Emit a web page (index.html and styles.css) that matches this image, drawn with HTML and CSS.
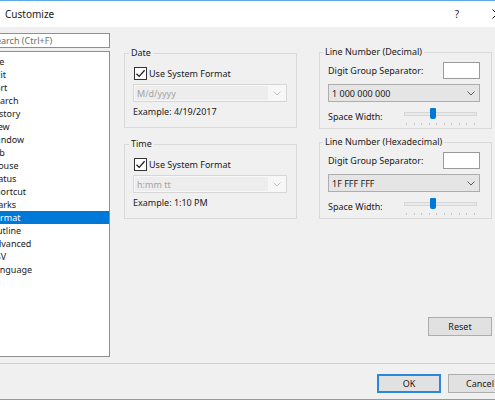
FILE: index.html
```html
<!DOCTYPE html>
<html>
<head>
<meta charset="utf-8">
<link rel="stylesheet" href="styles.css">
</head>
<body>
<div class="dialog">
  <div class="titlebar">
    <span class="title">Customize</span>
    <span class="tb-btn help">?</span>
    <span class="tb-btn close"><svg width="10" height="10" viewBox="0 0 10 10"><path d="M0.5 0.5 L9.5 9.5 M9.5 0.5 L0.5 9.5" stroke="#000" stroke-width="1" fill="none"/></svg></span>
  </div>
  <div class="content">
    <div class="sidebar">
      <div class="search">Search (Ctrl+F)</div>
      <ul class="list">
        <li>File</li>
        <li>Edit</li>
        <li>Sort</li>
        <li>Search</li>
        <li>History</li>
        <li>View</li>
        <li>Window</li>
        <li>Tab</li>
        <li>Mouse</li>
        <li>Status</li>
        <li>Shortcut</li>
        <li>Marks</li>
        <li class="selected">Format</li>
        <li>Outline</li>
        <li>Advanced</li>
        <li>CSV</li>
        <li>Language</li>
      </ul>
    </div>
    <div class="main">
      <div class="cols">
        <div class="col col-left">
          <fieldset class="group">
            <legend>Date</legend>
            <div class="check-row">
              <span class="checkbox"><svg width="13" height="13" viewBox="0 0 13 13"><path d="M2.5 6.8 L5.2 9.4 L10.6 3.2" stroke="#1e1e1e" stroke-width="1.3" fill="none"/></svg></span>
              <span>Use System Format</span>
            </div>
            <div class="combo disabled">
              <span class="field">M/d/yyyy</span>
              <span class="chev"><svg width="8" height="5" viewBox="0 0 8 5"><path d="M0.5 0.5 L4 4 L7.5 0.5" stroke="#c4c4c4" stroke-width="1" fill="none"/></svg></span>
            </div>
            <div class="example">Example: 4/19/2017</div>
          </fieldset>
          <fieldset class="group second-left">
            <legend>Time</legend>
            <div class="check-row">
              <span class="checkbox"><svg width="13" height="13" viewBox="0 0 13 13"><path d="M2.5 6.8 L5.2 9.4 L10.6 3.2" stroke="#1e1e1e" stroke-width="1.3" fill="none"/></svg></span>
              <span>Use System Format</span>
            </div>
            <div class="combo disabled">
              <span class="field">h:mm tt</span>
              <span class="chev"><svg width="8" height="5" viewBox="0 0 8 5"><path d="M0.5 0.5 L4 4 L7.5 0.5" stroke="#c4c4c4" stroke-width="1" fill="none"/></svg></span>
            </div>
            <div class="example">Example: 1:10 PM</div>
          </fieldset>
        </div>
        <div class="col col-right">
          <fieldset class="group rgroup">
            <legend>Line Number (Decimal)</legend>
            <div class="sep-row">
              <span>Digit Group Separator:</span>
              <span class="textbox"></span>
            </div>
            <div class="combo enabled">
              <span class="field">1 000 000 000</span>
              <span class="chev"><svg width="8" height="5" viewBox="0 0 8 5"><path d="M0.5 0.5 L4 4 L7.5 0.5" stroke="#5a5a5a" stroke-width="1" fill="none"/></svg></span>
            </div>
            <div class="slider-row">
              <span>Space Width:</span>
              <div class="slider">
                <div class="track"></div>
                <div class="thumb"></div>
                <div class="ticks"><i></i><i></i><i></i><i></i><i></i><i></i><i></i><i></i><i></i><i></i></div>
              </div>
            </div>
          </fieldset>
          <fieldset class="group rgroup second-right">
            <legend>Line Number (Hexadecimal)</legend>
            <div class="sep-row">
              <span>Digit Group Separator:</span>
              <span class="textbox"></span>
            </div>
            <div class="combo enabled">
              <span class="field">1F FFF FFF</span>
              <span class="chev"><svg width="8" height="5" viewBox="0 0 8 5"><path d="M0.5 0.5 L4 4 L7.5 0.5" stroke="#5a5a5a" stroke-width="1" fill="none"/></svg></span>
            </div>
            <div class="slider-row">
              <span>Space Width:</span>
              <div class="slider">
                <div class="track"></div>
                <div class="thumb"></div>
                <div class="ticks"><i></i><i></i><i></i><i></i><i></i><i></i><i></i><i></i><i></i><i></i></div>
              </div>
            </div>
          </fieldset>
        </div>
      </div>
      <div class="reset-row"><button class="btn">Reset</button></div>
    </div>
  </div>
  <div class="footer">
    <button class="btn default">OK</button>
    <button class="btn">Cancel</button>
  </div>
</div>
</body>
</html>
```

FILE: styles.css
```css
html, body {
  margin: 0;
  padding: 0;
  width: 495px;
  height: 400px;
  overflow: hidden;
  background: #f0f0f0;
}

.dialog {
  margin-left: -20px;
  width: 537px;
  font-family: "Noto Sans", "Open Sans", sans-serif;
  font-size: 9px;
  color: #1a1a1a;
  background: #f0f0f0;
}

.titlebar {
  height: 26px;
  border-top: 1px solid #5aaae6;
  background: #fff;
  display: flex;
  align-items: center;
  padding-left: 25px;
  box-sizing: content-box;
}

.title {
  flex: 1;
  font-size: 10px;
}

.tb-btn {
  width: 40px;
  display: flex;
  justify-content: center;
  align-items: center;
  font-size: 10px;
}

.content {
  display: flex;
  height: 336px;
  padding-left: 8px;
}

.sidebar {
  width: 122px;
  margin-top: 6px;
  display: flex;
  flex-direction: column;
  gap: 3px;
}

.search {
  height: 15px;
  box-sizing: border-box;
  border: 1px solid #8f8f8f;
  background: #fff;
  color: #6d6d6d;
  padding-left: 2px;
  line-height: 13px;
  white-space: nowrap;
  overflow: hidden;
}

.list {
  list-style: none;
  margin: 0;
  height: 306px;
  box-sizing: border-box;
  border: 1px solid #8f8f8f;
  background: #fff;
  padding: 3px 0 0 0;
}

.list li {
  height: 13px;
  line-height: 13px;
  padding-left: 1px;
  white-space: nowrap;
}

.list li.selected {
  background: #0078d7;
  color: #fff;
}

.main {
  margin-left: 14px;
  width: 368px;
  display: flex;
  flex-direction: column;
}

.cols {
  display: flex;
  gap: 22px;
  margin-top: 19px;
}

.col {
  width: 173px;
  display: flex;
  flex-direction: column;
}

.col-left {
  margin-top: 1px;
}

.group {
  margin: 0;
  min-width: 0;
  border: 1px solid #d9d9d9;
  padding: 0 9px 9px 8px;
  display: flex;
  flex-direction: column;
}

.group legend {
  padding: 0 2px;
  margin-left: -4px;
  line-height: 12px;
  font-size: 9px;
}

.second-left {
  margin-top: 10px;
}

.check-row {
  margin-top: 7px;
  height: 14px;
  display: flex;
  align-items: center;
  gap: 2px;
}

.checkbox {
  width: 13px;
  height: 13px;
  box-sizing: border-box;
  border: 1px solid #333;
  background: #fff;
  margin-left: 1px;
  display: flex;
  align-items: center;
  justify-content: center;
}

.checkbox svg {
  margin: -1px;
}

.combo {
  height: 18px;
  box-sizing: border-box;
  margin-top: 4px;
  display: flex;
  align-items: stretch;
}

.combo .field {
  flex: 1;
  display: flex;
  align-items: center;
  padding-left: 3px;
}

.combo .chev {
  width: 17px;
  display: flex;
  align-items: center;
  justify-content: center;
}

.combo.disabled {
  border: 1px solid #d6d6d6;
  background: #f7f7f7;
  color: #a3a3a3;
  padding: 1px;
}

.combo.disabled .field {
  background: #ededed;
  padding-left: 2px;
}

.combo.enabled {
  border: 1px solid #adadad;
  background: #e5e5e5;
  margin-top: 5px;
}

.example {
  margin-top: 4px;
  line-height: 12px;
}

.rgroup {
  padding: 0 11px 2px 8px;
}

.rgroup legend {
  margin-left: -5px;
}

.second-right {
  margin-top: 7px;
}

.sep-row {
  margin-top: 4px;
  display: flex;
  align-items: center;
  justify-content: space-between;
}

.textbox {
  width: 37px;
  height: 17px;
  box-sizing: border-box;
  border: 1px solid #9a9a9a;
  background: #fff;
}

.slider-row {
  margin-top: 4px;
  height: 20px;
  display: flex;
  justify-content: space-between;
}

.slider-row > span {
  line-height: 12px;
  margin-top: 5px;
}

.slider {
  width: 79px;
  height: 20px;
  position: relative;
}

.track {
  margin: 6px 3px 0 3px;
  height: 2px;
  background: #e7eaea;
  border: 1px solid #d6d6d6;
}

.thumb {
  position: absolute;
  left: 29px;
  top: 2px;
  width: 6px;
  height: 11px;
  background: #0078d7;
  border-radius: 1px 1px 2px 2px;
}

.ticks {
  margin: 7px 5px 0 5px;
  display: flex;
  justify-content: space-between;
}

.ticks i {
  display: block;
  width: 1px;
  height: 2px;
  background: #c4c4c4;
}

.reset-row {
  margin-top: auto;
  margin-bottom: 27px;
  display: flex;
  justify-content: flex-end;
}

.btn {
  width: 64px;
  height: 19px;
  box-sizing: border-box;
  border: 1px solid #adadad;
  background: #e1e1e1;
  font-family: "Noto Sans", "Open Sans", sans-serif;
  font-size: 9px;
  color: #1a1a1a;
  padding: 0;
  line-height: 16px;
}

.footer {
  border-top: 1px solid #d0d0d0;
  border-bottom: 1px solid #5aaae6;
  box-sizing: content-box;
  height: 25px;
  padding: 10px 5px 0 0;
  display: flex;
  justify-content: flex-end;
  gap: 7px;
}

.btn.default {
  border-color: #2b87d9;
  box-shadow: inset 0 0 0 1px #2b87d9;
}
```
